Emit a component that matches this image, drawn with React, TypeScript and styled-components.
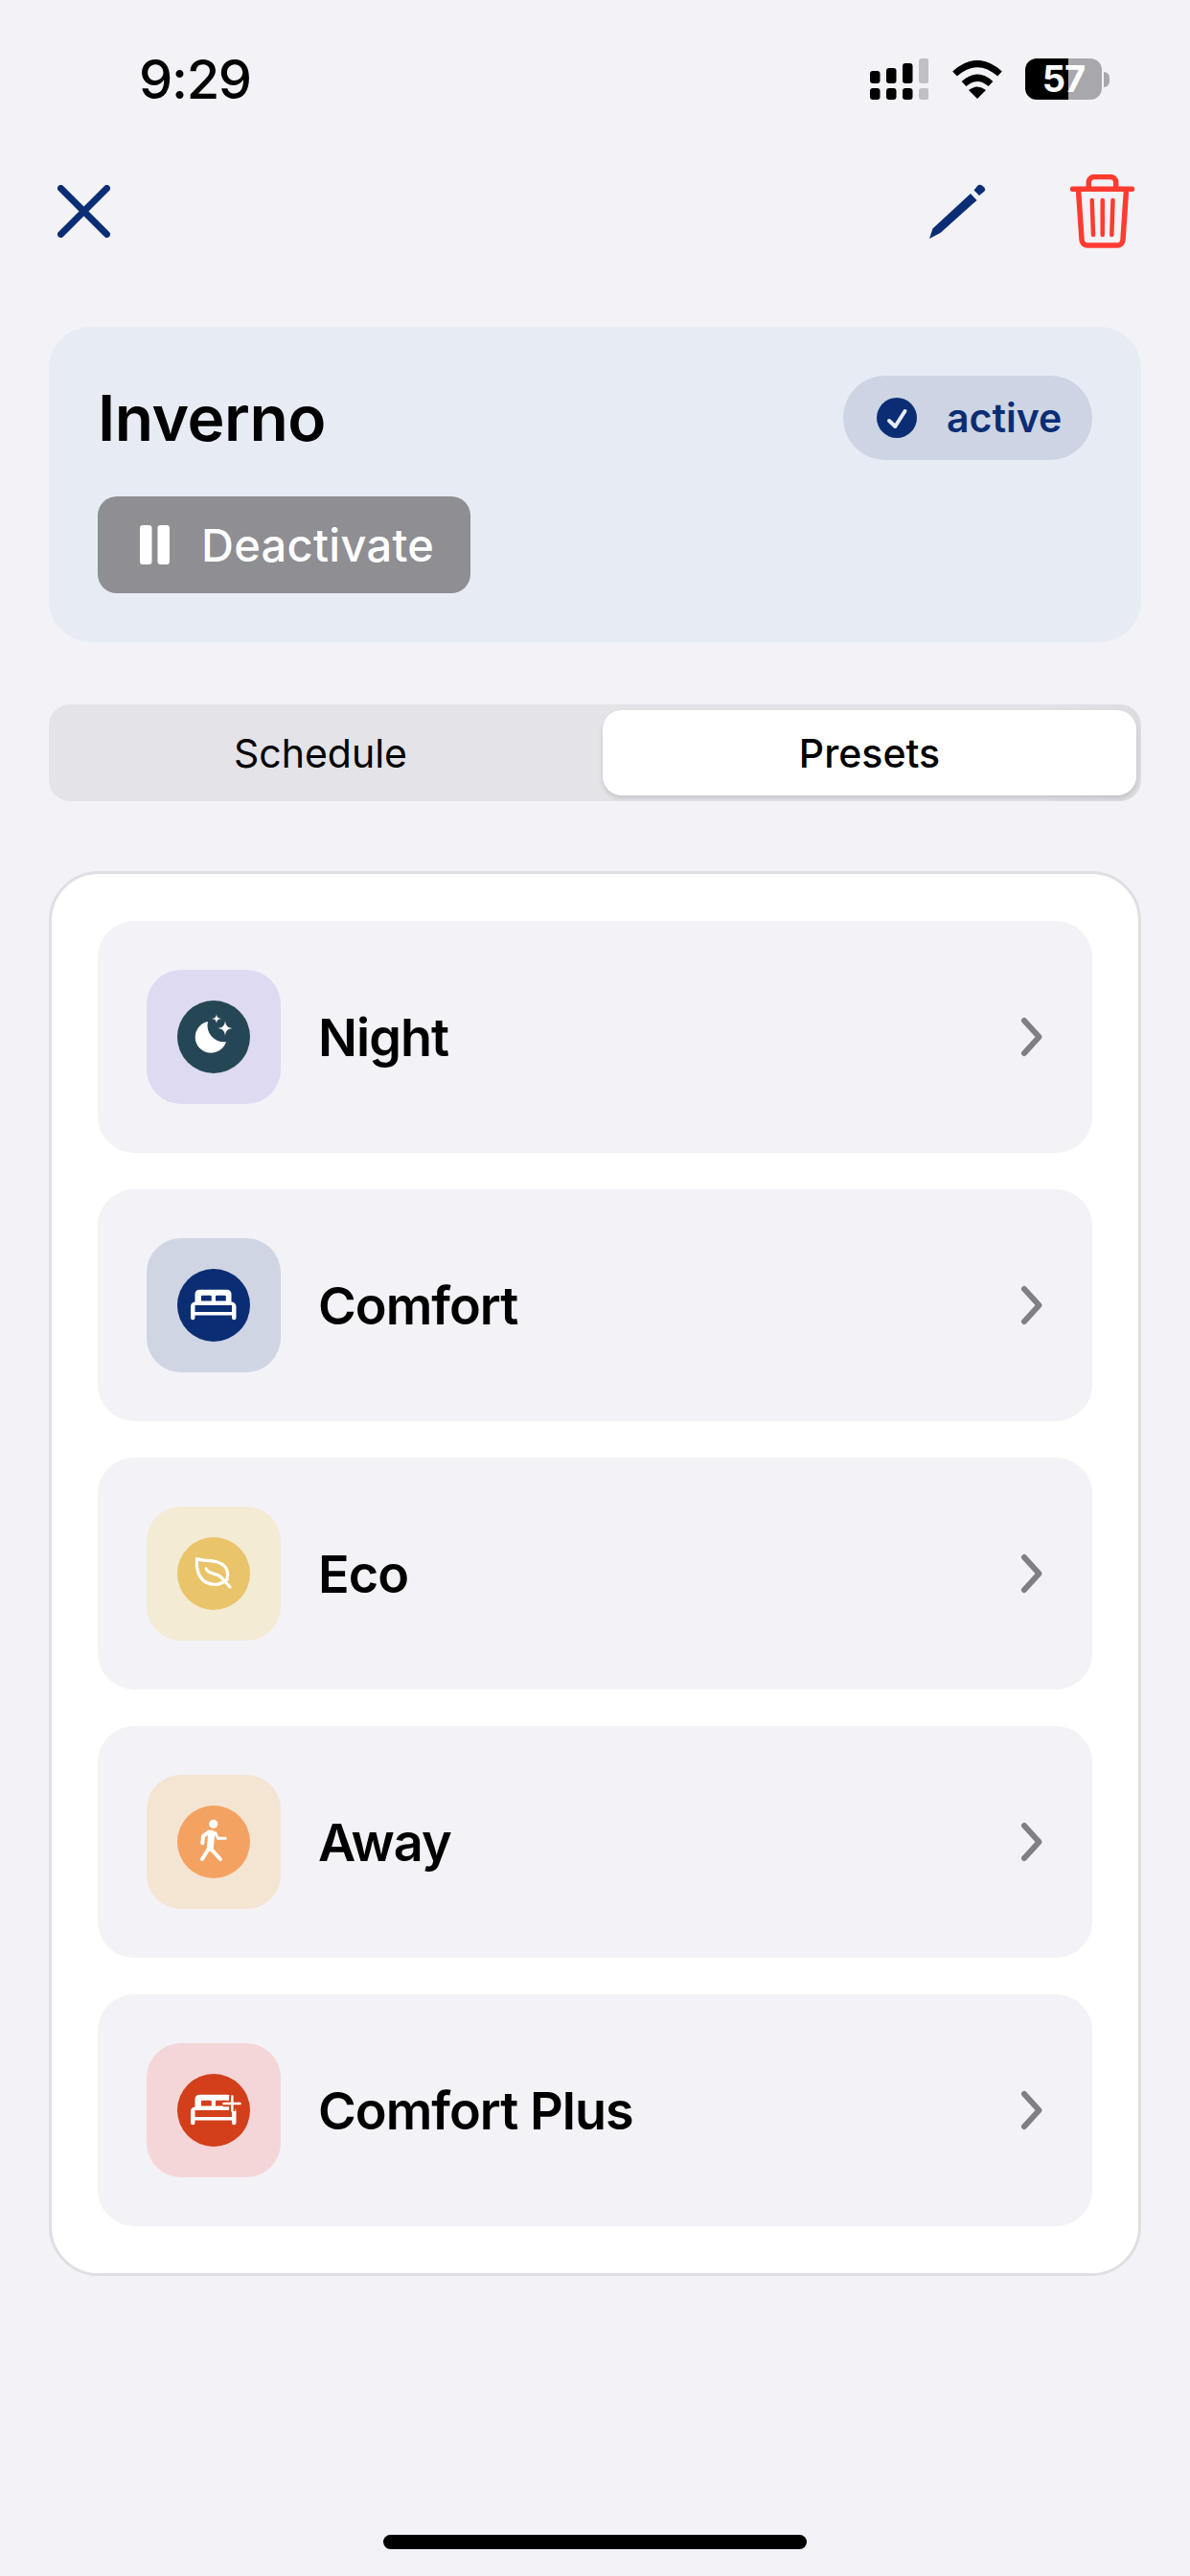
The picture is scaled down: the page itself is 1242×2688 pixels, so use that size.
import React from "react";
import styled, { createGlobalStyle } from "styled-components";

const Global = createGlobalStyle`
  html, body { margin: 0; padding: 0; background: #f2f2f7; }
  * { box-sizing: border-box; }
  body { font-family: Inter, "Liberation Sans", sans-serif; color: #000; }
`;

const NAVY = "#0a2d74";

const Page = styled.div`
  width: 1242px;
  height: 2688px;
  background: #f2f2f7;
  display: flex;
  flex-direction: column;
  overflow: hidden;
`;

const StatusBar = styled.div`
  height: 165px;
  padding: 50px 84px 0 145px;
  display: flex;
  justify-content: space-between;
  align-items: flex-start;
`;

const Time = styled.div`
  font-size: 56px;
  line-height: 66px;
  font-weight: 500;
  letter-spacing: -1.3px;
`;

const StatusIcons = styled.div`
  display: flex;
  align-items: center;
  margin-top: 11px;
`;

const Signal = styled.svg`
  width: 61px;
  height: 43px;
  display: block;
`;

const Wifi = styled.svg`
  width: 54px;
  height: 40px;
  display: block;
  margin-left: 24px;
`;

const BatteryBody = styled.div`
  width: 80px;
  height: 43px;
  margin-left: 23px;
  border-radius: 12px;
  background: linear-gradient(90deg, #000 0 56.5%, #a8a8ac 56.5% 100%);
  color: #fff;
  font-size: 38px;
  line-height: 43px;
  font-weight: 700;
  text-align: center;
  letter-spacing: -1px;
`;

const BatteryCap = styled.div`
  width: 6px;
  height: 16px;
  margin-left: 2px;
  border-radius: 0 8px 8px 0;
  background: #a8a8ac;
`;

const Nav = styled.div`
  height: 100px;
  padding: 5px 58px 5px 60px;
  margin-top: 5px;
  display: flex;
  align-items: center;
`;

const CloseIcon = styled.svg`
  width: 55px;
  height: 55px;
  display: block;
`;

const PencilIcon = styled.svg`
  width: 59px;
  height: 57px;
  display: block;
  margin-left: auto;
`;

const TrashIcon = styled.svg`
  width: 67px;
  height: 77px;
  display: block;
  margin-left: 88px;
`;

const Card = styled.div`
  margin: 71px 51px 0;
  height: 329px;
  padding: 51px;
  background: #e7ebf4;
  border-radius: 44px;
`;

const CardHead = styled.div`
  display: flex;
  justify-content: space-between;
  align-items: center;
`;

const Title = styled.h1`
  margin: 0;
  font-size: 66px;
  line-height: 88px;
  font-weight: 600;
  letter-spacing: -0.5px;
`;

const Pill = styled.div`
  width: 260px;
  height: 88px;
  padding-left: 35px;
  border-radius: 44px;
  background: #cdd4e3;
  display: flex;
  align-items: center;
  gap: 31px;
  color: ${NAVY};
  font-size: 41px;
  font-weight: 600;
`;

const CheckIcon = styled.svg`
  width: 42px;
  height: 42px;
  display: block;
`;

const DeactivateButton = styled.div`
  margin-top: 38px;
  width: 389px;
  height: 101px;
  padding-left: 44px;
  border-radius: 20px;
  background: #8e8e93;
  display: flex;
  align-items: center;
  gap: 33px;
  color: #fff;
  font-size: 47px;
  font-weight: 500;
  letter-spacing: 0.3px;
`;

const PauseIcon = styled.svg`
  width: 31px;
  height: 41px;
  display: block;
`;

const Segments = styled.div`
  margin: 65px 51px 0;
  height: 101px;
  padding: 6px 5px 6px 0;
  border-radius: 22px;
  background: linear-gradient(90deg, #e3e3e8 0 90%, #dcdce1 100%);
  display: grid;
  grid-template-columns: 1fr 557px;
  gap: 11px;
`;

const Segment = styled.div<{ $active?: boolean }>`
  display: flex;
  align-items: center;
  justify-content: center;
  border-radius: 20px;
  font-size: 41px;
  font-weight: ${(p) => (p.$active ? 500 : 400)};
  background: ${(p) => (p.$active ? "#fff" : "transparent")};
  box-shadow: ${(p) => (p.$active ? "0 3px 5px rgba(0,0,0,0.13)" : "none")};
`;

const ListCard = styled.div`
  margin: 73px 51px 0;
  height: 1466px;
  padding: 49px 48px;
  background: #fff;
  border: 3px solid #dfdfe3;
  border-radius: 52px;
  display: flex;
  flex-direction: column;
  gap: 38px;
`;

const Row = styled.div`
  height: 242px;
  flex: none;
  padding: 0 53px 0 51px;
  background: #f2f2f7;
  border-radius: 38px;
  display: flex;
  align-items: center;
`;

const IconBox = styled.div<{ $bg: string }>`
  width: 140px;
  height: 140px;
  flex: none;
  border-radius: 36px;
  background: ${(p) => p.$bg};
  display: flex;
  align-items: center;
  justify-content: center;
`;

const IconDisc = styled.svg`
  width: 76px;
  height: 76px;
  display: block;
`;

const RowLabel = styled.div`
  margin-left: 39px;
  flex: 1;
  font-size: 54px;
  font-weight: 600;
  letter-spacing: -1px;
`;

const Chevron = styled.svg`
  width: 21px;
  height: 40px;
  display: block;
  overflow: visible;
`;

const HomeBar = styled.div`
  margin: auto auto 28px;
  width: 442px;
  height: 15px;
  border-radius: 8px;
  background: #000;
`;

const Bed = ({ cut }: { cut?: boolean }) => (
  <>
    <path
      fill="#fff"
      fillRule="evenodd"
      d="M23 21.7H52a4.5 4.5 0 0 1 4.5 4.5V34.5a5 5 0 0 1 5 5V51a2.25 2.25 0 0 1-4.5 0V48.5H18.5V51a2.25 2.25 0 0 1-4.5 0V39.5a5 5 0 0 1 4.5-5V26.2a4.5 4.5 0 0 1 4.5-4.5ZM25 33.5V29a1.3 1.3 0 0 1 1.3-1.3h8.2a1.3 1.3 0 0 1 1.3 1.3v4.5ZM40 33.5V29a1.3 1.3 0 0 1 1.3-1.3h8.2a1.3 1.3 0 0 1 1.3 1.3v4.5ZM18.5 38H57V45H18.5Z"
    />
    {cut && (
      <>
        <path d="M48 31H66M57.3 23V39" stroke="#d23f1a" strokeWidth="6.5" fill="none" />
        <path d="M48.5 31H65.5M57.3 23.5V38.5" stroke="#fff" strokeWidth="2.6" strokeLinecap="round" fill="none" />
      </>
    )}
  </>
);

const presets = [
  {
    name: "Night",
    bg: "#dddaf2",
    disc: "#254655",
    art: (
      <>
        <path fill="#fff" d="M32 22A16.5 16.5 0 1 0 51 43A17 17 0 0 1 32 22Z" />
        <path fill="#fff" d="M50 21C50.6 26.5 52.5 28.4 58 29C52.5 29.6 50.6 31.5 50 37C49.4 31.5 47.5 29.6 42 29C47.5 28.4 49.4 26.5 50 21Z" />
        <path fill="#fff" d="M41 14C41.4 17.4 42.6 18.6 46 19C42.6 19.4 41.4 20.6 41 24C40.6 20.6 39.4 19.4 36 19C39.4 18.6 40.6 17.4 41 14Z" />
      </>
    ),
  },
  { name: "Comfort", bg: "#d0d5e3", disc: NAVY, art: <Bed /> },
  {
    name: "Eco",
    bg: "#f3ebd3",
    disc: "#e9c46a",
    art: (
      <g fill="none" stroke="#fff" strokeWidth="3.2" strokeLinecap="round" strokeLinejoin="round">
        <path d="M20.5 22.5C28 26 42 22 50 31C53 35 53 40 52 44C44 52 32 50 26 44C20 38 20 30 20.5 22.5Z" />
        <path d="M30 33C33 39 41 37 46 42L55 52" />
      </g>
    ),
  },
  {
    name: "Away",
    bg: "#f4e5d3",
    disc: "#f4a261",
    art: (
      <g fill="none" stroke="#fff" strokeLinecap="round" strokeLinejoin="round">
        <circle cx="37.7" cy="19.3" r="4.6" fill="#fff" stroke="none" />
        <path d="M35.7 29.3L34.3 44.3" strokeWidth="7" />
        <path d="M40 28.7L42.3 34.3H50.3" strokeWidth="3" />
        <path d="M33 27.7L27 32L26.3 39.3" strokeWidth="4" />
        <path d="M34.3 44.3L45 56" strokeWidth="4" />
        <path d="M32.3 46L26 56" strokeWidth="4" />
      </g>
    ),
  },
  { name: "Comfort Plus", bg: "#f5d6d8", disc: "#d23f1a", art: <Bed cut /> },
];

export default function App() {
  return (
    <Page>
      <Global />
      <StatusBar>
        <Time>9:29</Time>
        <StatusIcons>
          <Signal viewBox="0 0 61 43">
            <g fill="#000">
              <rect x="0" y="13" width="10.5" height="13" rx="3" />
              <rect x="17" y="10" width="10.5" height="16" rx="3" />
              <rect x="34" y="5" width="10.5" height="21" rx="3" />
              <rect x="0" y="31" width="10.5" height="12" rx="3" />
              <rect x="17" y="31" width="10.5" height="12" rx="3" />
              <rect x="34" y="31" width="10.5" height="12" rx="3" />
            </g>
            <g fill="#c0c0c4">
              <rect x="51" y="0" width="10.5" height="26" rx="3" />
              <rect x="51" y="31" width="10.5" height="12" rx="3" />
            </g>
          </Signal>
          <Wifi viewBox="0 0 54 40">
            <path d="M3.5 14Q27 -7 50.5 14" fill="none" stroke="#000" strokeWidth="7" />
            <path d="M13 24.5Q27 12 41 24.5" fill="none" stroke="#000" strokeWidth="7" />
            <path d="M18 31Q27 24 36 31L27 40Z" fill="#000" />
          </Wifi>
          <BatteryBody>57</BatteryBody>
          <BatteryCap />
        </StatusIcons>
      </StatusBar>

      <Nav>
        <CloseIcon viewBox="0 0 55 55">
          <path d="M3.5 3.5L51.5 51.5M51.5 3.5L3.5 51.5" stroke={NAVY} strokeWidth="7" strokeLinecap="round" />
        </CloseIcon>
        <PencilIcon viewBox="0 0 59 57">
          <path fill={NAVY} d="M0 57L3.5 46.5L43 10L49.5 17L11.5 51Z" />
          <path fill={NAVY} d="M46.5 6.5L50.5 1.5Q52.5 0 54.5 1.2L57.3 3.4Q59 5.5 57.3 7.7L52 12Z" />
        </PencilIcon>
        <TrashIcon viewBox="0 0 67 77">
          <g fill="none" stroke="#ff3b30" strokeLinecap="round" strokeLinejoin="round">
            <path d="M2.5 15.3H64.5" strokeWidth="5.5" />
            <path d="M19.3 14V8A6 6 0 0 1 25.3 2.5H41.7A6 6 0 0 1 47.7 8V14" strokeWidth="5.5" />
            <path d="M8.5 16L12 68A6 6 0 0 0 18.5 74H48.5A6 6 0 0 0 55 68L58.5 16" strokeWidth="5.5" />
            <path d="M22.7 27L24 63M33.7 27V63M44.5 27L43.3 63" strokeWidth="4.5" />
          </g>
        </TrashIcon>
      </Nav>

      <Card>
        <CardHead>
          <Title>Inverno</Title>
          <Pill>
            <CheckIcon viewBox="0 0 42 42">
              <circle cx="21" cy="21" r="21" fill={NAVY} />
              <path d="M13 24L19.3 30L29.5 14" fill="none" stroke="#e7ebf4" strokeWidth="4" strokeLinecap="round" strokeLinejoin="round" />
            </CheckIcon>
            active
          </Pill>
        </CardHead>
        <DeactivateButton>
          <PauseIcon viewBox="0 0 31 41">
            <rect x="0" y="0" width="12.5" height="41" rx="3" fill="#fff" />
            <rect x="18.5" y="0" width="12.5" height="41" rx="3" fill="#fff" />
          </PauseIcon>
          Deactivate
        </DeactivateButton>
      </Card>

      <Segments>
        <Segment>Schedule</Segment>
        <Segment $active>Presets</Segment>
      </Segments>

      <ListCard>
        {presets.map((p) => (
          <Row key={p.name}>
            <IconBox $bg={p.bg}>
              <IconDisc viewBox="0 0 76 76">
                <circle cx="38" cy="38" r="38" fill={p.disc} />
                {p.art}
              </IconDisc>
            </IconBox>
            <RowLabel>{p.name}</RowLabel>
            <Chevron viewBox="0 0 21 40">
              <path d="M3 3L18.5 20L3 37" fill="none" stroke="#7f7f84" strokeWidth="6" strokeLinecap="round" strokeLinejoin="round" />
            </Chevron>
          </Row>
        ))}
      </ListCard>

      <HomeBar />
    </Page>
  );
}
